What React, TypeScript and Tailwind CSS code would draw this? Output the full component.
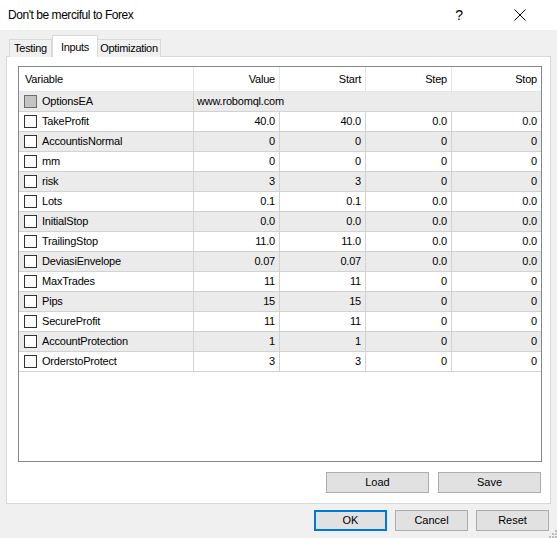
import React from 'react';

type Row = { name: string; value: string; start?: string; step?: string; stop?: string; disabled?: boolean };

const rows: Row[] = [
  { name: 'OptionsEA', value: 'www.robomql.com', disabled: true },
  { name: 'TakeProfit', value: '40.0', start: '40.0', step: '0.0', stop: '0.0' },
  { name: 'AccountisNormal', value: '0', start: '0', step: '0', stop: '0' },
  { name: 'mm', value: '0', start: '0', step: '0', stop: '0' },
  { name: 'risk', value: '3', start: '3', step: '0', stop: '0' },
  { name: 'Lots', value: '0.1', start: '0.1', step: '0.0', stop: '0.0' },
  { name: 'InitialStop', value: '0.0', start: '0.0', step: '0.0', stop: '0.0' },
  { name: 'TrailingStop', value: '11.0', start: '11.0', step: '0.0', stop: '0.0' },
  { name: 'DeviasiEnvelope', value: '0.07', start: '0.07', step: '0.0', stop: '0.0' },
  { name: 'MaxTrades', value: '11', start: '11', step: '0', stop: '0' },
  { name: 'Pips', value: '15', start: '15', step: '0', stop: '0' },
  { name: 'SecureProfit', value: '11', start: '11', step: '0', stop: '0' },
  { name: 'AccountProtection', value: '1', start: '1', step: '0', stop: '0' },
  { name: 'OrderstoProtect', value: '3', start: '3', step: '0', stop: '0' },
];

const gridCols = 'grid grid-cols-[175px_86px_86px_86px_89px]';

function Checkbox({ disabled }: { disabled?: boolean }) {
  return (
    <span
      className={
        'w-[13px] h-[13px] shrink-0 border ' +
        (disabled ? 'border-[#6d6d6d] bg-[#c4c4c4]' : 'border-[#333333] bg-white')
      }
    />
  );
}

function Button({ label, focused, className = '' }: { label: string; focused?: boolean; className?: string }) {
  return (
    <button
      className={
        'flex items-center justify-center bg-[#e1e1e1] text-[11px] text-black ' +
        (focused ? 'border-2 border-[#0078d7] ' : 'border border-[#adadad] ') +
        className
      }
    >
      {label}
    </button>
  );
}

export default function App() {
  return (
    <div
      className="w-[557px] h-[538px] flex flex-col bg-[#f0f0f0] overflow-hidden select-none"
      style={{ fontFamily: '"Liberation Sans", Arial, sans-serif' }}
    >
      {/* title bar */}
      <div className="h-[30px] shrink-0 bg-white flex items-center pl-[8px]">
        <span className="text-[12px] text-black tracking-[-0.45px] flex-1">Don't be merciful to Forex</span>
        <span className="text-[14px] text-black mr-[51px]">?</span>
        <svg width="12" height="12" viewBox="0 0 12 12" className="mr-[31px]">
          <path d="M0.5 0.5 L11.5 11.5 M11.5 0.5 L0.5 11.5" stroke="#000" strokeWidth="1" fill="none" />
        </svg>
      </div>

      {/* body */}
      <div className="flex-1 flex flex-col px-[6px] pt-[6px] relative">
        {/* tabs */}
        <div className="flex items-end h-[21px] pl-[3px] relative z-10 -mb-px text-[11px] tracking-[-0.3px]">
          <div className="w-[43px] h-[18px] border border-b-0 border-[#d9d9d9] bg-[#f0f0f0] text-black flex items-center justify-center">
            Testing
          </div>
          <div className="w-[46px] h-[22px] border border-b-0 border-[#d9d9d9] bg-white text-black flex items-start justify-center pt-[3px]">
            Inputs
          </div>
          <div className="w-[63px] h-[18px] border border-b-0 border-l-0 border-[#d9d9d9] bg-[#f0f0f0] text-black flex items-center justify-center">
            Optimization
          </div>
        </div>

        {/* tab panel */}
        <div className="h-[448px] border border-[#d9d9d9] bg-white flex flex-col pl-[11px] pr-[8px] pt-[9px]">
          <div className="w-[524px] h-[396px] border border-[#828790] bg-white text-[11px] text-black tracking-[-0.2px]">
            <div className={gridCols + ' h-[25px] border-b border-[#e5e5e5]'}>
              <div className="border-r border-[#e5e5e5] flex items-center pl-[6px]">Variable</div>
              <div className="border-r border-[#e5e5e5] flex items-center justify-end pr-[4px]">Value</div>
              <div className="border-r border-[#e5e5e5] flex items-center justify-end pr-[4px]">Start</div>
              <div className="border-r border-[#e5e5e5] flex items-center justify-end pr-[4px]">Step</div>
              <div className="flex items-center justify-end pr-[4px]">Stop</div>
            </div>
            {rows.map((r, i) => (
              <div
                key={r.name}
                className={gridCols + ' h-[20px] border-b border-[#d2d2d2] ' + (i % 2 === 0 ? 'bg-[#ebebeb]' : 'bg-white')}
              >
                <div className="border-r border-[#d2d2d2] flex items-center pl-[5px] gap-[5px]">
                  <Checkbox disabled={r.disabled} />
                  <span>{r.name}</span>
                </div>
                {r.disabled ? (
                  <div className="col-span-4 flex items-center pl-[3px]">{r.value}</div>
                ) : (
                  <>
                    <div className="border-r border-[#d2d2d2] flex items-center justify-end pr-[4px]">{r.value}</div>
                    <div className="border-r border-[#d2d2d2] flex items-center justify-end pr-[4px]">{r.start}</div>
                    <div className="border-r border-[#d2d2d2] flex items-center justify-end pr-[4px]">{r.step}</div>
                    <div className="flex items-center justify-end pr-[4px]">{r.stop}</div>
                  </>
                )}
              </div>
            ))}
          </div>

          <div className="flex justify-end gap-[9px] mt-[10px] pr-[1px]">
            <Button label="Load" className="w-[103px] h-[21px]" />
            <Button label="Save" className="w-[103px] h-[21px]" />
          </div>
        </div>

        {/* dialog buttons */}
        <div className="flex justify-end gap-[8px] mt-[6px] pr-[2px]">
          <Button label="OK" focused className="w-[73px] h-[21px]" />
          <Button label="Cancel" className="w-[73px] h-[21px]" />
          <Button label="Reset" className="w-[73px] h-[21px]" />
        </div>

        {/* resize grip */}
        <svg width="8" height="8" viewBox="0 0 8 8" className="absolute right-0 bottom-0">
          <rect x="6" y="0" width="2" height="2" fill="#bcbcbc" />
          <rect x="3" y="3" width="2" height="2" fill="#bcbcbc" />
          <rect x="6" y="3" width="2" height="2" fill="#bcbcbc" />
          <rect x="0" y="6" width="2" height="2" fill="#bcbcbc" />
          <rect x="3" y="6" width="2" height="2" fill="#bcbcbc" />
          <rect x="6" y="6" width="2" height="2" fill="#bcbcbc" />
        </svg>
      </div>
    </div>
  );
}
